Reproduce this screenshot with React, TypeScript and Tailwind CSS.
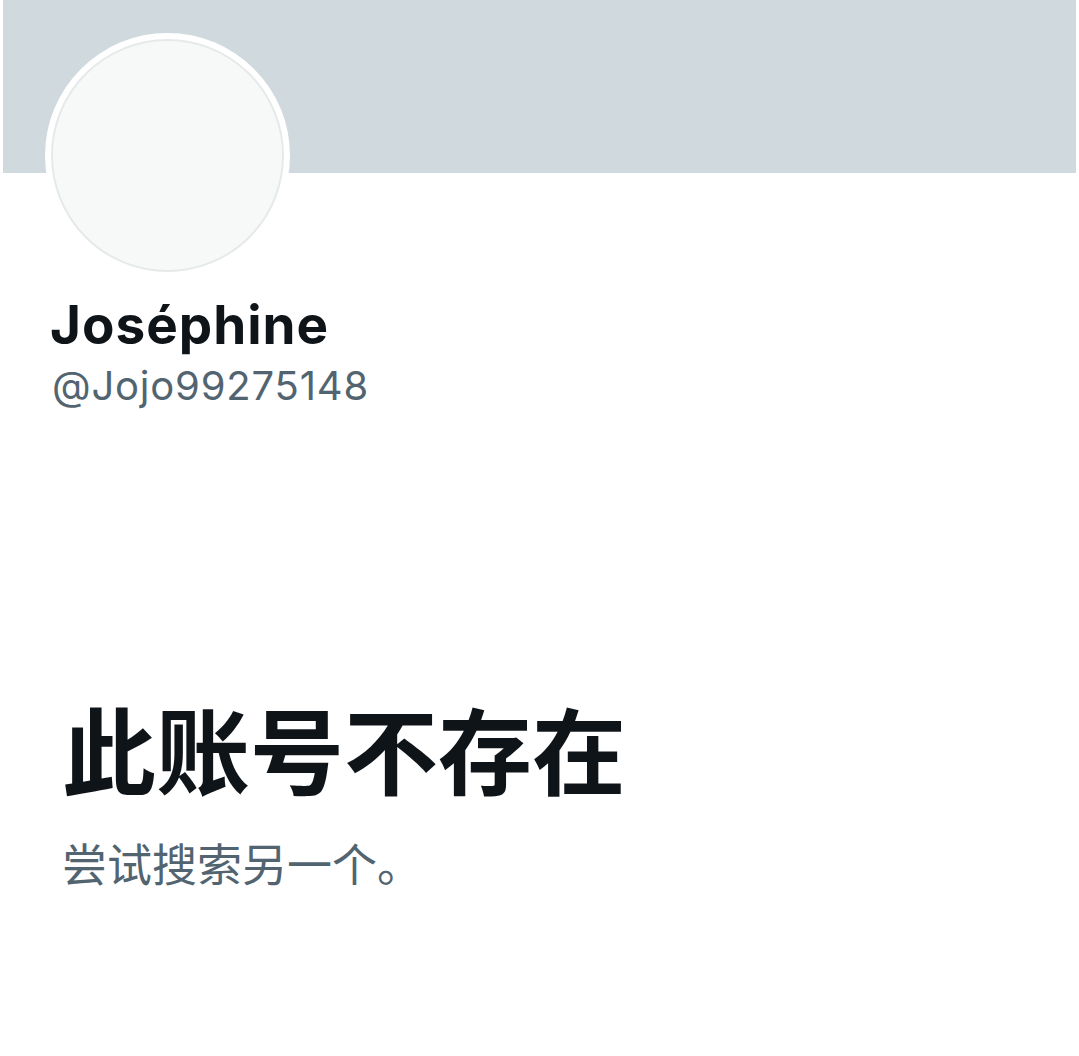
export default function App() {
  return (
    <div className="min-h-[1056px] w-full bg-white">
      <div className="mx-[3px] h-[173px] bg-[#cfd9de]" />
      <div className="px-[45px]">
        <div className="-mt-[140px] h-[245px] w-[245px] rounded-full bg-white p-[6px]">
          <div className="h-full w-full rounded-full border-2 border-[#e6e9ea] bg-[#f7f9f9]" />
        </div>
      </div>
      <div className="mt-[15px] pl-[50px] font-['Inter','Noto_Sans_CJK_SC',sans-serif]">
        <div className="text-[53px] font-bold leading-[64px] tracking-[1px] text-[#0f1419]">
          Joséphine
        </div>
        <div className="mt-[5px] pl-[2px] text-[40px] leading-[48px] tracking-[0.8px] text-[#536471]">
          @Jojo99275148
        </div>
      </div>
      <div className="mt-[285px] pl-[62px] font-['Noto_Sans_CJK_SC',sans-serif]">
        <div className="text-[94px] font-bold leading-[104px] text-[#0f1419]">此账号不存在</div>
        <div className="mt-[36px] text-[45px] leading-[56px] text-[#536471]">尝试搜索另一个。</div>
      </div>
    </div>
  )
}
